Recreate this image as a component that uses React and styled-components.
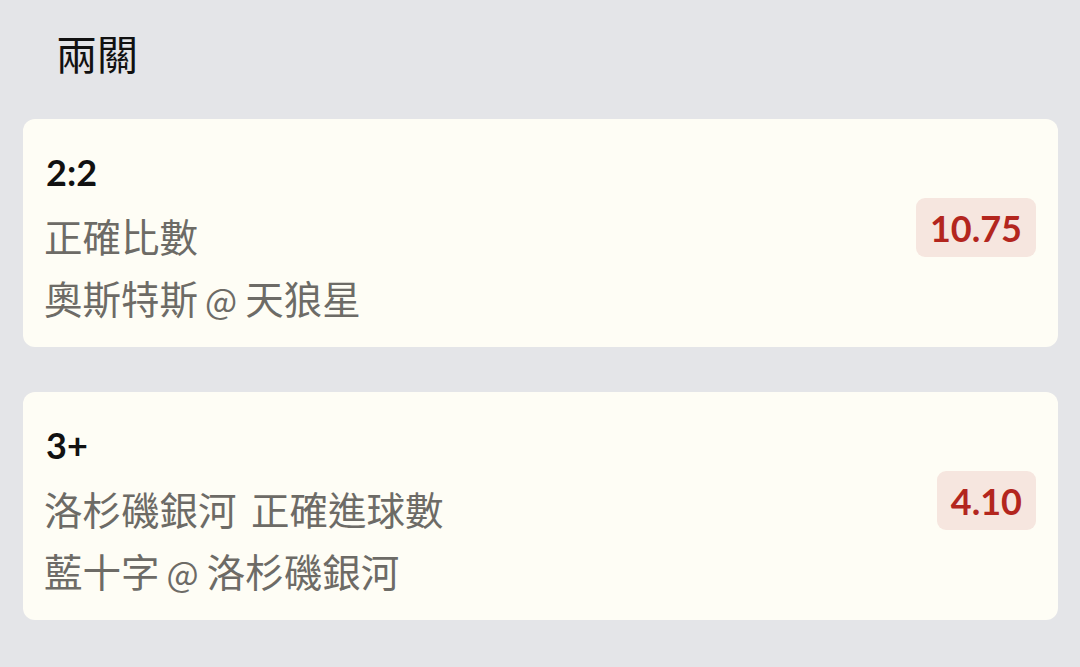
import React from 'react';
import styled, { createGlobalStyle } from 'styled-components';

const bets = [
  { selection: '2:2', market: '正確比數', away: '奧斯特斯', home: '天狼星', odds: '10.75' },
  { selection: '3+', market: '洛杉磯銀河 正確進球數', away: '藍十字', home: '洛杉磯銀河', odds: '4.10' },
];

const App = () => {
  return (
    <Page>
      <GlobalStyle />
      <Title>兩關</Title>
      <List>
        {bets.map((bet) => (
          <Card key={bet.selection}>
            <Info>
              <Selection>{bet.selection}</Selection>
              <Detail>{bet.market}</Detail>
              <Detail>
                {bet.away}
                <At>@</At>
                {bet.home}
              </Detail>
            </Info>
            <Odds>{bet.odds}</Odds>
          </Card>
        ))}
      </List>
    </Page>
  );
};

export default App;

const GlobalStyle = createGlobalStyle`
  body {
    margin: 0;
    background: #e4e5e8;
    font-family: Lato, "Noto Sans CJK TC", sans-serif;
  }
`;

const Page = styled.div`
  width: 1080px;
  height: 667px;
  box-sizing: border-box;
  padding: 21px 22px 0 23px;
  background: #e4e5e8;
  overflow: hidden;
`;

const Title = styled.h1`
  margin: 0 0 0 33px;
  font-size: 41px;
  font-weight: 400;
  line-height: 62px;
  color: #111;
  font-family: "Noto Sans CJK TC", sans-serif;
`;

const List = styled.div`
  display: flex;
  flex-direction: column;
  gap: 45px;
  margin-top: 36px;
`;

const Card = styled.div`
  display: flex;
  align-items: center;
  justify-content: space-between;
  height: 228px;
  box-sizing: border-box;
  padding: 20px 22px 16px 21px;
  background: #fefdf5;
  border-radius: 12px;
`;

const Info = styled.div`
  display: flex;
  flex-direction: column;
`;

const Selection = styled.div`
  font-family: Lato, sans-serif;
  font-weight: 700;
  font-size: 36px;
  line-height: 64px;
  color: #111;
  padding-left: 2px;
`;

const Detail = styled.div`
  font-family: "Noto Sans CJK TC", sans-serif;
  font-size: 38.5px;
  line-height: 62px;
  word-spacing: 6px;
  color: #6d6b66;
`;

const At = styled.span`
  font-size: 34px;
  margin: 0 8px 0 7px;
`;

const Odds = styled.div`
  padding: 0 14px;
  height: 59px;
  display: flex;
  align-items: center;
  margin-bottom: 15px;
  border-radius: 9px;
  background: #f6e6df;
  color: #b3261e;
  font-family: Lato, sans-serif;
  font-weight: 700;
  font-size: 36px;
`;
